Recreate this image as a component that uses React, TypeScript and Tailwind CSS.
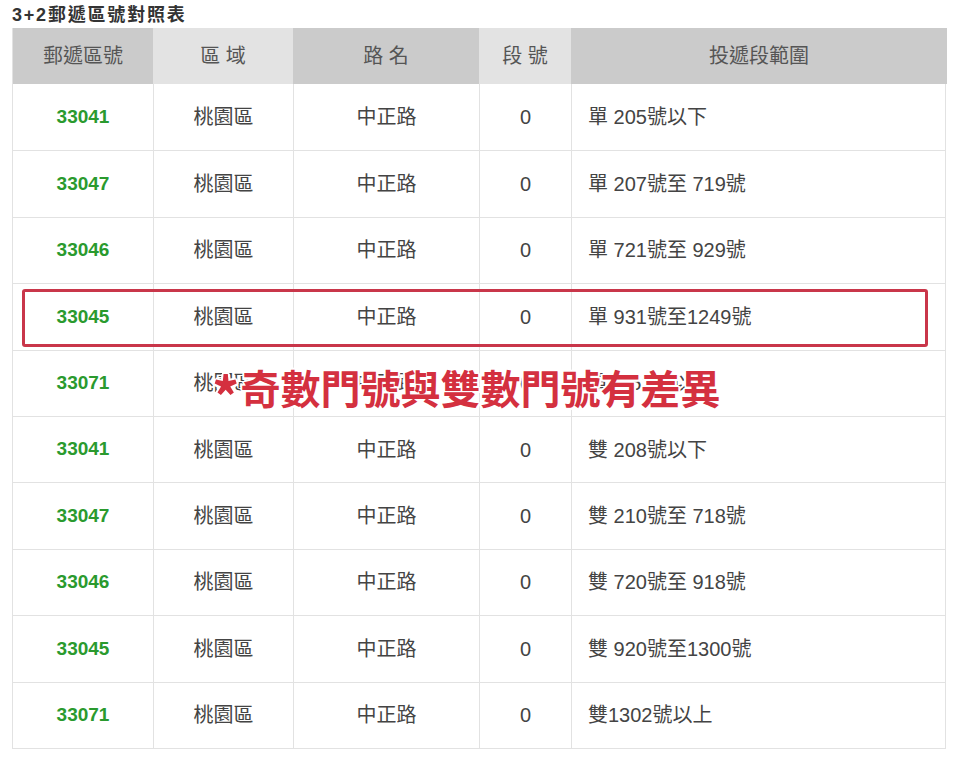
const rows = [
  { code: '33041', range: '單 205號以下' },
  { code: '33047', range: '單 207號至 719號' },
  { code: '33046', range: '單 721號至 929號' },
  { code: '33045', range: '單 931號至1249號' },
  { code: '33071', range: '單1251號以上' },
  { code: '33041', range: '雙 208號以下' },
  { code: '33047', range: '雙 210號至 718號' },
  { code: '33046', range: '雙 720號至 918號' },
  { code: '33045', range: '雙 920號至1300號' },
  { code: '33071', range: '雙1302號以上' },
];

const headers = ['郵遞區號', '區 域', '路 名', '段 號', '投遞段範圍'];

const font = { fontFamily: '"Liberation Sans", "Noto Sans CJK TC", sans-serif' };

export default function App() {
  return (
    <div className="relative w-[960px] h-[758px] bg-white overflow-hidden" style={font}>
      <div className="pl-[12px] pt-[4px] h-[28px] text-[18px] font-bold text-[#333] tracking-[1.8px] leading-[22px]">
        3+2郵遞區號對照表
      </div>

      <div className="ml-[12px] w-[934px] border-l border-r border-b border-[#e2e2e2]">
        <div className="grid grid-cols-[140px_140px_186px_92px_376px] h-[56px] text-[20px] text-[#555]">
          {headers.map((h, i) => (
            <div
              key={h}
              className={`flex items-center justify-center ${i % 2 === 0 ? 'bg-[#cbcbcb]' : 'bg-[#e3e3e3]'}`}
            >
              {h}
            </div>
          ))}
        </div>

        {rows.map((r, i) => (
          <div
            key={i}
            className={`grid grid-cols-[140px_140px_186px_92px_376px] h-[66.4px] text-[20px] text-[#444] ${i > 0 ? 'border-t border-[#e2e2e2]' : ''}`}
          >
            <div className="flex items-center justify-center font-bold text-[19px] text-[#2a9a2e]">{r.code}</div>
            <div className="flex items-center justify-center border-l border-[#e2e2e2]">桃園區</div>
            <div className="flex items-center justify-center border-l border-[#e2e2e2]">中正路</div>
            <div className="flex items-center justify-center border-l border-[#e2e2e2]">0</div>
            <div className="flex items-center pl-[16px] border-l border-[#e2e2e2]">{r.range}</div>
          </div>
        ))}
      </div>

      {/* highlight box */}
      <div className="absolute left-[22px] top-[289px] w-[906px] h-[58px] border-[3px] border-[#c9364a] rounded-[3px]" />

      {/* note */}
      <div
        className="absolute left-[212px] top-[363px] text-[40px] leading-[48px] font-bold text-[#d4303f] whitespace-nowrap"
        style={{
          fontFamily: '"Noto Sans CJK TC", sans-serif',
          textShadow:
            '2px 0 0 #fff, -2px 0 0 #fff, 0 2px 0 #fff, 0 -2px 0 #fff, 1.5px 1.5px 0 #fff, -1.5px -1.5px 0 #fff, 1.5px -1.5px 0 #fff, -1.5px 1.5px 0 #fff',
        }}
      >
        <span className="relative top-[14px] text-[54px] leading-[0] mr-[1px]">*</span>奇數門號與雙數門號有差異
      </div>
    </div>
  );
}
